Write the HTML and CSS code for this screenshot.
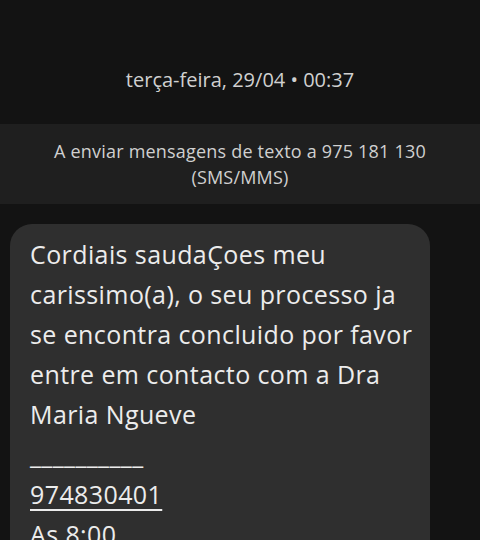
FILE: index.html
```html
<!DOCTYPE html>
<html lang="pt">
<head>
  <meta charset="UTF-8" />
  <meta name="viewport" content="width=device-width, initial-scale=1.0" />
  <title>Mensagens</title>
  <link rel="stylesheet" href="styles.css">
</head>
<body>
  <div class="thread">
    <div class="date">terça-feira, 29/04 • 00:37</div>

    <div class="banner">
      A enviar mensagens de texto a 975 181 130<br>(SMS/MMS)
    </div>

    <div class="bubble">
      <p>Cordiais saudaÇoes meu carissimo(a), o seu processo ja se encontra concluido por favor entre em contacto com a Dra Maria Ngueve</p>
      <p>__________</p>
      <p><a class="phone" href="#">974830401</a></p>
      <p>As 8:00</p>
    </div>
  </div>
</body>
</html>
```

FILE: styles.css
```css
:root {
  --bg: #131313;
  --banner: #1f1f1f;
  --bubble: #2f2f2f;
  --text: #ececec;
  --muted: #d0d0d0;
}

body {
  margin: 0;
  background: var(--bg);
  font-family: 'Open Sans', Roboto, sans-serif;
  color: var(--text);
  overflow: hidden;
}

.thread {
  display: flex;
  flex-direction: column;
}

.date {
  height: 124px;
  box-sizing: border-box;
  padding-top: 67px;
  text-align: center;
  font-size: 20px;
  line-height: 26px;
  color: var(--muted);
}

.banner {
  background: var(--banner);
  padding: 14px 20px 14px;
  text-align: center;
  font-size: 18px;
  letter-spacing: 0.2px;
  line-height: 26px;
  color: var(--muted);
}

.bubble {
  margin: 20px 50px 0 10px;
  padding: 10px 8px 20px 20px;
  background: var(--bubble);
  border-radius: 22px;
  font-size: 25px;
  letter-spacing: 0.4px;
  line-height: 40px;
}

.bubble p {
  margin: 0;
}

.phone {
  color: var(--text);
  text-decoration: underline;
  text-decoration-thickness: 2px;
  text-underline-offset: 5px;
}
```
